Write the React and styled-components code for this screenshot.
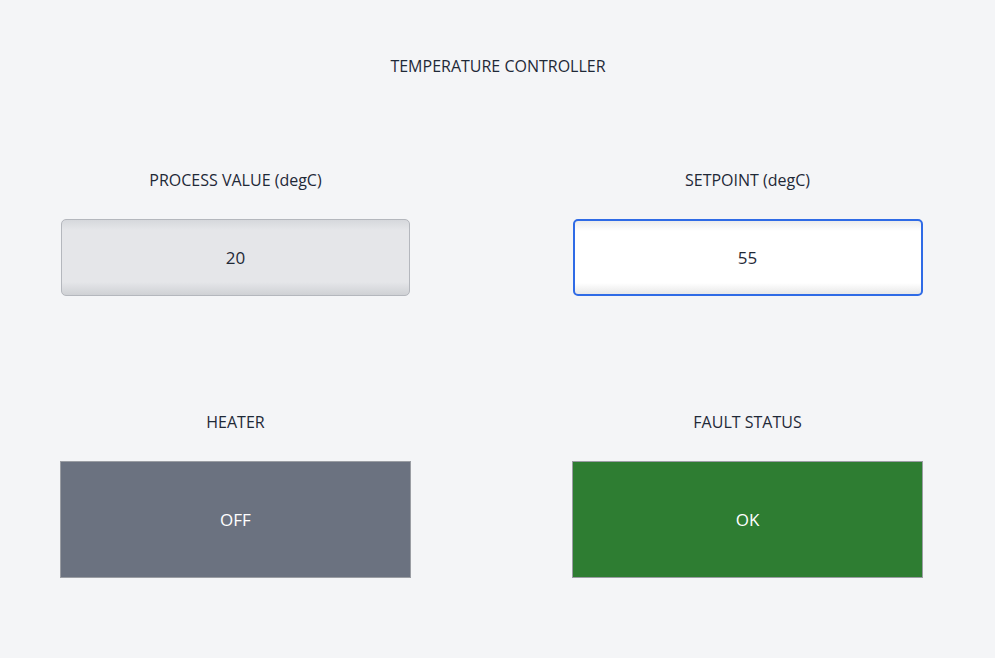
import React from "react";
import styled, { createGlobalStyle } from "styled-components";

const GlobalStyle = createGlobalStyle`
  html, body {
    margin: 0;
    padding: 0;
    background: #f4f5f7;
  }
  body {
    font-family: "Open Sans", "Noto Sans", sans-serif;
    color: #1f2937;
  }
`;

export default function App() {
  return (
    <>
      <GlobalStyle />
      <Page>
        <Title>TEMPERATURE CONTROLLER</Title>
        <Grid>
          <Cell>
            <Label>PROCESS VALUE (degC)</Label>
            <Field>20</Field>
          </Cell>
          <Cell>
            <Label>SETPOINT (degC)</Label>
            <Field $editable>55</Field>
          </Cell>
          <Cell>
            <Label>HEATER</Label>
            <Status $bg="#6b7280">OFF</Status>
          </Cell>
          <Cell>
            <Label>FAULT STATUS</Label>
            <Status $bg="#2e7d32">OK</Status>
          </Cell>
        </Grid>
      </Page>
    </>
  );
}

const Page = styled.div`
  width: 995px;
  height: 658px;
  box-sizing: border-box;
  padding: 55px 72px 0 60px;
`;

const Title = styled.h1`
  margin: 0;
  font-size: 16px;
  font-weight: 400;
  line-height: 22px;
  text-align: center;
  padding-left: 13px;
`;

const Grid = styled.div`
  display: grid;
  grid-template-columns: 351px 351px;
  column-gap: 161px;
  row-gap: 115px;
  margin-top: 92px;
`;

const Cell = styled.div`
  display: flex;
  flex-direction: column;
  align-items: center;
`;

const Label = styled.div`
  font-size: 16px;
  line-height: 22px;
  margin-bottom: 28px;
`;

const Field = styled.div`
  box-sizing: border-box;
  width: ${(p) => (p.$editable ? "350px" : "349px")};
  height: 77px;
  display: flex;
  align-items: center;
  justify-content: center;
  font-size: 17px;
  border-radius: 5px;
  border: ${(p) => (p.$editable ? "2px solid #2f6be6" : "1px solid #b4b7bd")};
  background: ${(p) =>
    p.$editable
      ? "linear-gradient(#ececec 0, #ffffff 10px, #ffffff 62px, #e8e8e8 100%)"
      : "linear-gradient(#d6d8dc 0, #e5e6e9 10px, #e5e6e9 62px, #cfd1d5 100%)"};
`;

const Status = styled.div`
  box-sizing: border-box;
  width: 351px;
  height: 117px;
  display: flex;
  align-items: center;
  justify-content: center;
  font-size: 17px;
  color: #ffffff;
  background: ${(p) => p.$bg};
  border: 1px solid #9a9da3;
`;
